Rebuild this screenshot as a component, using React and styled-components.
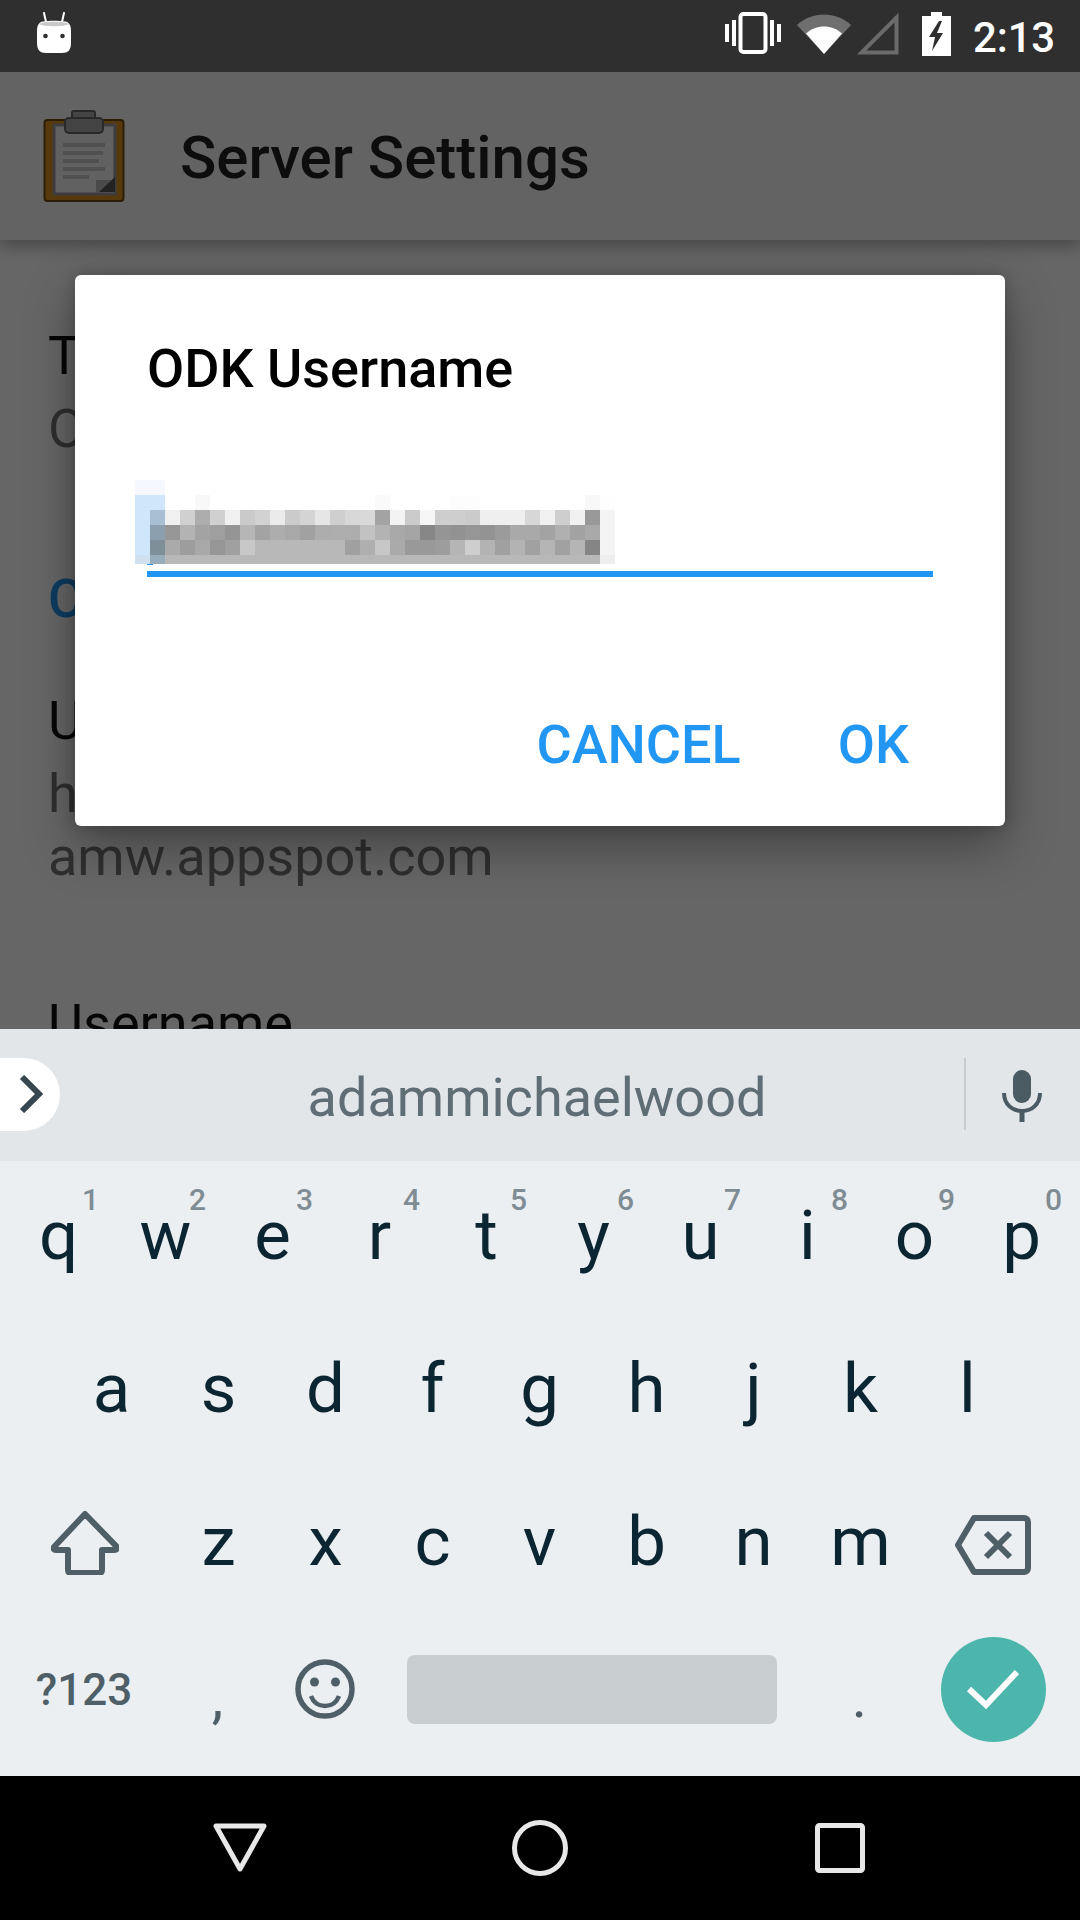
import React from "react";
import styled, { createGlobalStyle } from "styled-components";

const Global = createGlobalStyle`
  html, body { margin: 0; padding: 0; background: #000; }
  * { box-sizing: border-box; }
`;

const Screen = styled.div`
  width: 1080px; height: 1920px; display: flex; flex-direction: column; overflow: hidden;
  font-family: Roboto, "Liberation Sans", sans-serif; background: #fff;
`;
const StatusBar = styled.header`
  height: 72px; flex: none; background: #2f2f2f; position: relative; display: flex; align-items: flex-start;
  padding: 12px 25px 0 37px; color: #fff;
`;
const StatusRight = styled.div`
  margin-left: auto; display: flex; align-items: flex-start; 
`;
const Clock = styled.span`
  font-size: 42px; line-height: 44px; font-weight: 500; margin: 4px 0 0 22px; letter-spacing: -0.2px;
`;
const Stage = styled.div`
  flex: 1; position: relative; overflow: hidden; background: #fff; min-height: 0;
`;
const AppBar = styled.div`
  height: 168px; background: #f8f8f8; display: flex; align-items: center; padding-left: 43px;
  box-shadow: 0 6px 16px rgba(0,0,0,.32); position: relative;
`;
const AppTitle = styled.h1`
  margin: 4px 0 0 55px; font-size: 60px; font-weight: 500; color: #212121; line-height: 60px;
`;
const Settings = styled.div`
  padding: 84px 48px 0; font-size: 54px; line-height: 63px;
`;
const Primary = styled.div`color: #111; margin-bottom: 10px;`;
const Secondary = styled.div`color: #757575;`;
const Section = styled.div`color: #2196f3; margin: 107px 0 59px; font-weight: 500;`;
const Pref = styled.div`margin-bottom: 104px;`;
const Scrim = styled.div`position: absolute; inset: 0; background: rgba(0,0,0,.6);`;
const DialogLayer = styled.div`position: absolute; inset: 0; padding: 203px 75px 0;`;
const Dialog = styled.div`
  height: 551px; background: #fff; border-radius: 6px; display: flex; flex-direction: column;
  box-shadow: 0 20px 50px rgba(0,0,0,.35), 0 0 16px rgba(0,0,0,.2);
`;
const DialogTitle = styled.h2`
  margin: 0; padding: 64px 0 0 72px; font-size: 54px; line-height: 60px; font-weight: 500; color: #000;
`;
const Field = styled.div`
  margin: 81px 0 0 60px; display: flex; flex-direction: column;
`;
const Underline = styled.div`
  width: 786px; height: 6px; background: #2196f3; margin: 5px 0 0 12px;
`;
const Actions = styled.div`
  margin-top: auto; display: flex; justify-content: flex-end; align-items: center; gap: 97px; padding: 0 96px 51px 0;
`;
const ActionButton = styled.span`
  font-size: 54px; line-height: 60px; font-weight: 500; color: #2196f3;
`;
const Keyboard = styled.div`
  height: 747px; flex: none; background: #eceff1; display: flex; flex-direction: column; 
`;
const Strip = styled.div`
  height: 132px; flex: none; background: #e2e6e9; display: flex; align-items: center; position: relative; padding-top: 1px;
`;
const Pill = styled.div`
  width: 60px; height: 73px; background: #fff; border-radius: 0 37px 37px 0; display: flex; align-items: center; padding-left: 19px; margin-bottom: 3px;
`;
const Suggestion = styled.div`
  flex: 1; text-align: center; font-size: 54px; line-height: 64px; color: #5f6d75; margin: 4px 0 0 50px;
`;
const StripDivider = styled.div`
  width: 2px; height: 72px; background: #c6ccd0; margin-bottom: 3px;
`;
const MicCell = styled.div`
  width: 114px; padding-right: 2px; display: flex; justify-content: center;
`;
const KeyRows = styled.div`
  flex: 1; display: flex; flex-direction: column; padding-top: 1px;
`;
const KeyRow = styled.div`
  height: ${p => p.$h || 153}px; flex: none; display: flex; align-items: center; padding-left: ${p => p.$inset || 5}px;
  padding-bottom: ${p => p.$pb || 0}px;
`;
const Key = styled.div`
  width: ${p => p.$w || 107}px; flex: none; height: 100%; display: flex; align-items: center; justify-content: center; position: relative;
`;
const Letter = styled.span`
  font-size: 69px; line-height: 70px; color: #0b2533; font-weight: 400;
  position: relative; top: -3px;
`;
const Hint = styled.span`
  position: absolute; top: 23px; right: 13px; font-size: 30px; line-height: 30px; font-weight: 500; color: #7f8c93;
`;
const FnLabel = styled.span`
  font-size: 44px; font-weight: 500; color: #4e5f68; line-height: 50px; position: relative; top: 1px;
`;
const Punct = styled.span`
  font-size: 58px; color: #4e5f68; line-height: 60px; position: relative; top: ${p => p.$top}px;
`;
const SpaceBar = styled.div`
  width: 370px; height: 69px; background: #c8cdd0; border-radius: 8px;
`;
const EnterButton = styled.div`
  width: 105px; height: 105px; border-radius: 50%; background: #4db6ac; display: flex; align-items: center; justify-content: center;
`;
const NavBar = styled.nav`
  height: 144px; flex: none; background: #000; display: grid; grid-template-columns: 213px 54px 245px 56px 247px 50px; align-items: center;
`;
const NavCell = styled.div`
  grid-column: ${p => p.$col}; display: flex; justify-content: center;
`;

const mosaic = [
  ["#f5f9ff","#f5f9ff"],
  ["#d0e6fb","#d0e6fb","#fff","#fff","#f8f8f8","#fff","#fff","#fff","#fff","#fff","#fff","#fff","#fff","#fff","#fff","#fff","#fafafa","#fff","#fff","#fff","#fff","#fdfdfd","#fdfdfd","#fff","#fff","#fff","#fff","#fff","#fff","#fff","#f8f8f8","#fefefe"],
  ["#d0e6fb","#a8bfd3","#f0f0f0","#d0d0d0","#adadad","#d0d0d0","#f0f0f0","#cacaca","#d2d2d2","#ebebeb","#cbcbcb","#d4d4d4","#e6e6e6","#cfcfcf","#d8d8d8","#d9d9d9","#a3a3a3","#f3f3f3","#cbcbcb","#f6f6f6","#cecece","#cecece","#cbcbcb","#efefef","#efefef","#efefef","#d7d7d7","#f0f0f0","#cecece","#f1f1f1","#999999","#f4f4f4"],
  ["#d0e6fb","#8c9fae","#969696","#b3b3b3","#a3a3a3","#9f9f9f","#959595","#b6b6b6","#a3a3a3","#adadad","#a8a8a8","#a1a1a1","#adadad","#aeaeae","#adadad","#c2c2c2","#b3b3b3","#a8a8a8","#a5a5a5","#878787","#959595","#929292","#969696","#939393","#9b9b9b","#a9a9a9","#a9a9a9","#a3a3a3","#b0b0b0","#a2a2a2","#a9a9a9","#f4f4f4"],
  ["#d0e6fb","#7f8f9a","#aaaaaa","#9d9d9d","#a8a8a8","#969696","#a0a0a0","#c8c8c8","#b8b8b8","#b8b8b8","#b8b8b8","#b8b8b8","#b8b8b8","#b8b8b8","#a0a0a0","#afafaf","#c7c7c7","#aaaaaa","#999999","#999999","#9d9d9d","#b5b5b5","#cecece","#b3b3b3","#a0a0a0","#b3b3b3","#a1a1a1","#b5b5b5","#a1a1a1","#b5b5b5","#858585","#f4f4f4"],
  ["#d0e0ef","#98adbc",...Array(29).fill("#b8b8b8"),"#eeeeee"],
];

const BlurredValue = () => (
  <svg width="480" height="86" viewBox="0 0 480 86" shapeRendering="crispEdges" style={{ display: "block" }}>
    {mosaic.map((row, r) =>
      row.map((fill, c) => <rect key={`${r}-${c}`} x={c * 15} y={r * 15} width="15" height={r === 5 ? 9 : 15} fill={fill} />)
    )}
    <rect x="12" y="84" width="6" height="1" fill="#2196f3" />
  </svg>
);

const BotIcon = () => (
  <svg width="34" height="42" viewBox="0 0 34 42">
    <path d="M7 1l2 9M27 1l-2 9" stroke="#fff" strokeWidth="2" strokeLinecap="round" />
    <path d="M0 19c0-6 2-9 6-9.500C12 8.500 22 8.500 28 9.500c4 .5 6 3.500 6 9.500v12c0 7-3 10-9 10H9C3 41 0 38 0 31z" fill="#fff" />
    <path d="M2 12c3-3 27-3 30 0-4 3-26 3-30 0z" fill="#c9c9c9" />
    <circle cx="8.500" cy="24" r="2.300" fill="#2f2f2f" />
    <circle cx="25.500" cy="24" r="2.300" fill="#2f2f2f" />
  </svg>
);
const VibrateIcon = () => (
  <svg width="56" height="42" viewBox="0 0 56 42" fill="#fff">
    <rect x="0" y="12" width="4" height="18" />
    <rect x="7" y="8" width="4" height="26" />
    <rect x="45" y="8" width="4" height="26" />
    <rect x="52" y="12" width="4" height="18" />
    <rect x="15.500" y="2" width="25" height="38" rx="3" fill="none" stroke="#fff" strokeWidth="4" />
  </svg>
);
const WifiIcon = () => (
  <svg width="54" height="44" viewBox="0 0 54 44" style={{ marginLeft: 16 }}>
    <path d="M0 13C15-1 39-1 54 13L27 42z" fill="#6f6f6f" />
    <path d="M9 21.500C19 12 35 12 45 21.500L27 42z" fill="#fff" />
  </svg>
);
const SignalIcon = () => (
  <svg width="42" height="43" viewBox="0 0 42 43" style={{ marginLeft: 6 }}>
    <path d="M39.500 5.500V40.500H4.500z" fill="none" stroke="#6b6b6b" strokeWidth="4" />
  </svg>
);
const BatteryIcon = () => (
  <svg width="29" height="44" viewBox="0 0 29 44" style={{ marginLeft: 23 }}>
    <path d="M9 0h11v4h9v40H0V4h9z" fill="#fff" />
    <path d="M17 9L7 25h6l-3 14 11-18h-6l5-12z" fill="#2f2f2f" />
  </svg>
);
const ClipboardIcon = () => (
  <svg width="82" height="92" viewBox="0 0 82 92">
    <rect x="1.500" y="10" width="79" height="81" rx="3" fill="#d98f22" stroke="#6e4a12" strokeWidth="2" />
    <rect x="11" y="15" width="61" height="69" fill="#f2f2f2" stroke="#9a9a9a" strokeWidth="3" />
    <path d="M20 33h42v4H20zM20 41h40v4H20zM20 49h36v4H20zM20 57h42v4H20zM20 65h26v4H20z" fill="#c8c8c8" />
    <path d="M53 83V70h19L62 83z" fill="#b8b8b8" />
    <path d="M56 82l16-15v15z" fill="#555" />
    <rect x="29" y="1" width="23" height="10" rx="2" fill="#aaa" stroke="#666" strokeWidth="2" />
    <rect x="22" y="8" width="38" height="15" rx="4" fill="#aaa" stroke="#666" strokeWidth="2" />
  </svg>
);
const Chevron = () => (
  <svg width="24" height="38" viewBox="0 0 24 38">
    <path d="M3 2l17 17L3 36" fill="none" stroke="#37474f" strokeWidth="6" />
  </svg>
);
const MicIcon = () => (
  <svg width="40" height="52" viewBox="0 0 40 52" fill="none">
    <rect x="11" y="0" width="18" height="33" rx="9" fill="#4b5b64" />
    <path d="M2 23c0 11 8 18 18 18s18-7 18-18" stroke="#4b5b64" strokeWidth="4" />
    <path d="M20 40v12" stroke="#4b5b64" strokeWidth="5" />
  </svg>
);
const ShiftIcon = () => (
  <svg width="68" height="64" viewBox="0 0 68 64" fill="none" style={{ marginBottom: 4 }}>
    <path d="M34 3L3 36c-1 2 0 3 2 3h12v20c0 2 1 3 3 3h28c2 0 3-1 3-3V39h12c2 0 3-1 3-3z" stroke="#4e5f68" strokeWidth="6" strokeLinejoin="round" />
  </svg>
);
const DeleteIcon = () => (
  <svg width="76" height="60" viewBox="0 0 76 60" fill="none" style={{ marginRight: 3 }}>
    <path d="M19 3h50c2.500 0 4 1.500 4 4v46c0 2.500-1.500 4-4 4H19L3 30z" stroke="#4e5f68" strokeWidth="6" strokeLinejoin="round" />
    <path d="M31 18l24 24M55 18L31 42" stroke="#4e5f68" strokeWidth="6" />
  </svg>
);
const EmojiIcon = () => (
  <svg width="60" height="60" viewBox="0 0 60 60" fill="none">
    <circle cx="30" cy="30" r="27" stroke="#4e5f68" strokeWidth="5.500" />
    <circle cx="19.500" cy="23" r="4.500" fill="#4e5f68" />
    <circle cx="40.500" cy="23" r="4.500" fill="#4e5f68" />
    <path d="M16 37c3 8 9 10 14 10s11-2 14-10" stroke="#4e5f68" strokeWidth="4.500" />
  </svg>
);
const CheckIcon = () => (
  <svg width="52" height="40" viewBox="0 0 52 40" fill="none">
    <path d="M2 20l17 16L50 3" stroke="#fff" strokeWidth="6" />
  </svg>
);
const BackIcon = () => (
  <svg width="54" height="50" viewBox="0 0 54 50" fill="none">
    <path d="M3 3h48L27 46z" stroke="#e8e8e8" strokeWidth="5" strokeLinejoin="round" />
  </svg>
);
const HomeIcon = () => (
  <svg width="56" height="56" viewBox="0 0 56 56" fill="none">
    <circle cx="28" cy="28" r="25.500" stroke="#e8e8e8" strokeWidth="5" />
  </svg>
);
const RecentIcon = () => (
  <svg width="50" height="50" viewBox="0 0 50 50" fill="none">
    <rect x="2.500" y="2.500" width="45" height="45" rx="2" stroke="#e8e8e8" strokeWidth="5" />
  </svg>
);

const row1 = [["q","1"],["w","2"],["e","3"],["r","4"],["t","5"],["y","6"],["u","7"],["i","8"],["o","9"],["p","0"]];

export default function App() {
  return (
    <Screen>
      <Global />
      <StatusBar>
        <BotIcon />
        <StatusRight>
          <VibrateIcon />
          <WifiIcon />
          <SignalIcon />
          <BatteryIcon />
          <Clock>2:13</Clock>
        </StatusRight>
      </StatusBar>
      <Stage>
        <AppBar>
          <ClipboardIcon />
          <AppTitle>Server Settings</AppTitle>
        </AppBar>
        <Settings>
          <Primary>Type</Primary>
          <Secondary>ODK Aggregate</Secondary>
          <Section>Connection</Section>
          <Pref>
            <Primary>URL</Primary>
            <Secondary>https://opendatakit-<br />amw.appspot.com</Secondary>
          </Pref>
          <Primary>Username</Primary>
        </Settings>
        <Scrim />
        <DialogLayer>
          <Dialog>
            <DialogTitle>ODK Username</DialogTitle>
            <Field>
              <BlurredValue />
              <Underline />
            </Field>
            <Actions>
              <ActionButton>CANCEL</ActionButton>
              <ActionButton>OK</ActionButton>
            </Actions>
          </Dialog>
        </DialogLayer>
      </Stage>
      <Keyboard>
        <Strip>
          <Pill><Chevron /></Pill>
          <Suggestion>adammichaelwood</Suggestion>
          <StripDivider />
          <MicCell><MicIcon /></MicCell>
        </Strip>
        <KeyRows>
          <KeyRow>
            {row1.map(([l, n]) => (
              <Key key={l}><Letter>{l}</Letter><Hint>{n}</Hint></Key>
            ))}
          </KeyRow>
          <KeyRow $inset={58}>
            {"asdfghjkl".split("").map(l => <Key key={l}><Letter>{l}</Letter></Key>)}
          </KeyRow>
          <KeyRow>
            <Key $w={160}><ShiftIcon /></Key>
            {"zxcvbnm".split("").map(l => <Key key={l}><Letter>{l}</Letter></Key>)}
            <Key $w={160}><DeleteIcon /></Key>
          </KeyRow>
          <KeyRow $h={158} $pb={22} $inset={4}>
            <Key $w={160}><FnLabel>?123</FnLabel></Key>
            <Key><Punct $top={8}>,</Punct></Key>
            <Key><EmojiIcon /></Key>
            <Key $w={428}><SpaceBar /></Key>
            <Key><Punct $top={8}>.</Punct></Key>
            <Key $w={160}><EnterButton><CheckIcon /></EnterButton></Key>
          </KeyRow>
        </KeyRows>
      </Keyboard>
      <NavBar>
        <NavCell $col={2}><BackIcon /></NavCell>
        <NavCell $col={4}><HomeIcon /></NavCell>
        <NavCell $col={6}><RecentIcon /></NavCell>
      </NavBar>
    </Screen>
  );
}
